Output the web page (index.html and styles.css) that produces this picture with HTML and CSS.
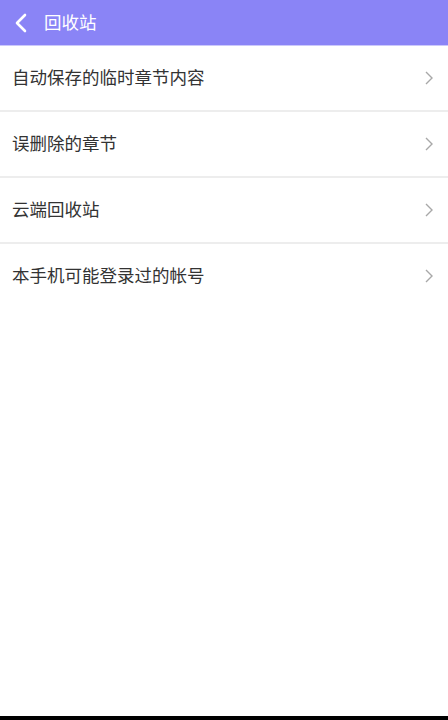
FILE: index.html
```html
<!DOCTYPE html>
<html lang="zh">
<head>
<meta charset="utf-8">
<link rel="stylesheet" href="styles.css">
</head>
<body>
<div class="app">
  <header class="bar">
    <svg class="back" width="14" height="20" viewBox="0 0 14 20"><path d="M11 2 L3 10 L11 18" fill="none" stroke="#fff" stroke-width="2.6" stroke-linecap="round" stroke-linejoin="round"/></svg>
    <span class="title">回收站</span>
  </header>
  <ul class="list">
    <li class="row"><span class="label">自动保存的临时章节内容</span><svg class="chev" width="10" height="16" viewBox="0 0 10 16"><path d="M2 2 L8 8 L2 14" fill="none" stroke="#a8a8a8" stroke-width="1.4"/></svg></li>
    <li class="row"><span class="label">误删除的章节</span><svg class="chev" width="10" height="16" viewBox="0 0 10 16"><path d="M2 2 L8 8 L2 14" fill="none" stroke="#a8a8a8" stroke-width="1.4"/></svg></li>
    <li class="row"><span class="label">云端回收站</span><svg class="chev" width="10" height="16" viewBox="0 0 10 16"><path d="M2 2 L8 8 L2 14" fill="none" stroke="#a8a8a8" stroke-width="1.4"/></svg></li>
    <li class="row last"><span class="label">本手机可能登录过的帐号</span><svg class="chev" width="10" height="16" viewBox="0 0 10 16"><path d="M2 2 L8 8 L2 14" fill="none" stroke="#a8a8a8" stroke-width="1.4"/></svg></li>
  </ul>
  <div class="fill"></div>
  <div class="navbar"></div>
</div>
</body>
</html>
```
FILE: styles.css
```css
html, body { margin: 0; padding: 0; }
body { font-family: "Noto Sans CJK SC", "Noto Sans", sans-serif; background: #fff; }
.app { width: 448px; height: 720px; display: flex; flex-direction: column; }
.bar { height: 45px; background: #8a84f6; border-bottom: 1px solid #cbc8fb; display: flex; align-items: center; padding-left: 14px; flex: none; }
.back { display: block; }
.title { color: #fff; font-size: 17.5px; margin-left: 16px; margin-bottom: 3px; }
.list { list-style: none; margin: 0; padding: 0; }
.row { height: 64px; border-bottom: 2px solid #ededed; display: flex; align-items: center; justify-content: space-between; padding: 0 14px 0 12px; font-size: 17.5px; color: #333; }
.row.last { border-bottom: none; }
.label { margin-bottom: 3px; }
.chev { display: block; }
.fill { flex: 1; }
.navbar { height: 4px; background: #000; flex: none; }
```
